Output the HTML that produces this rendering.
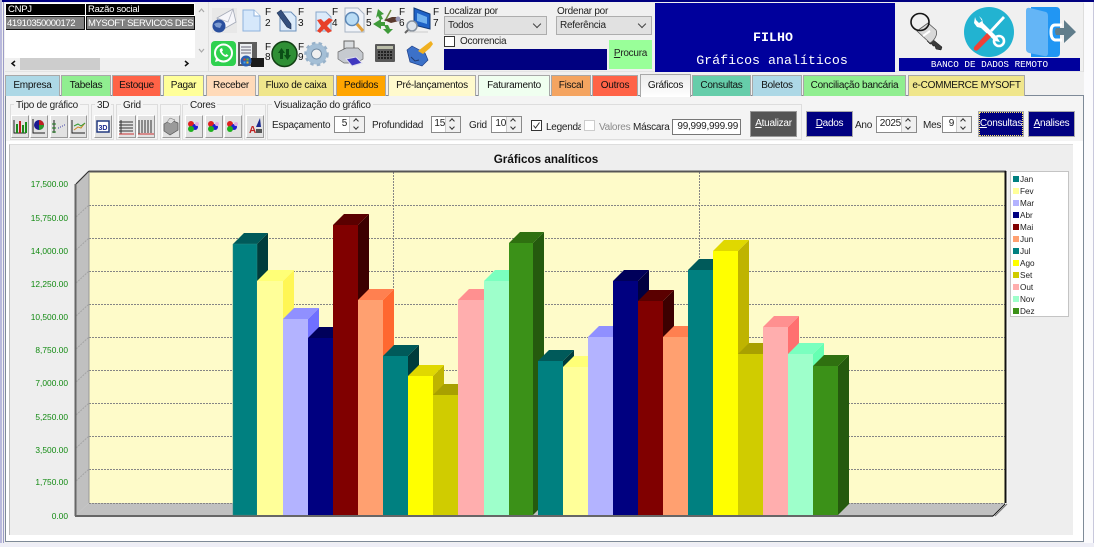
<!DOCTYPE html>
<html><head><meta charset="utf-8"><style>
html,body{margin:0;padding:0;width:1094px;height:547px;overflow:hidden;background:#f0f0f0;font:10px "Liberation Sans",sans-serif;color:#222;letter-spacing:-.26px}
.a{position:absolute;box-sizing:border-box;white-space:nowrap}
.tab{position:absolute;top:75px;height:21px;box-sizing:border-box;border:1px solid #a8a8a8;border-bottom:none;text-align:center;line-height:20px;color:#111}
.gb{position:absolute;top:104px;height:36px;box-sizing:border-box;border:1px solid #ddd}
.gl{position:absolute;top:100px;background:#f4f4f4;padding:0 2px;line-height:12px;color:#222}
.tb{position:absolute;top:115px;height:23px;box-sizing:border-box;background:#e2e2e2;border:1px solid;border-color:#fff #999 #999 #fff}
.sp{position:absolute;height:17px;box-sizing:border-box;background:#fff;border:1px solid #8a8a8a;line-height:14px;text-align:right;padding-right:17px;color:#222}
.sp i{position:absolute;right:0;top:0;width:14px;height:15px;background:#f0f0f0;border-left:1px solid #ccc}
.sp i:before{content:"";position:absolute;left:4px;top:2px;width:3px;height:3px;border-left:1px solid #333;border-top:1px solid #333;transform:rotate(45deg)}
.sp i:after{content:"";position:absolute;left:4px;top:8px;width:3px;height:3px;border-right:1px solid #333;border-bottom:1px solid #333;transform:rotate(45deg)}
.nb{position:absolute;top:111px;height:26px;box-sizing:border-box;background:#000080;color:#fff;text-align:center;line-height:24px;border:1px solid #aaa}
.nb u,.pb u{text-decoration:underline}
.sel{position:absolute;top:16px;height:19px;box-sizing:border-box;background:#e1e1e1;border:1px solid #adadad;line-height:17px;padding-left:3px;color:#222}
.sel:after{content:"";position:absolute;right:6px;top:4px;width:5px;height:5px;border-right:1px solid #444;border-bottom:1px solid #444;transform:rotate(45deg)}
.cb{position:absolute;width:11px;height:11px;box-sizing:border-box;background:#fff;border:1px solid #333}
svg{position:absolute;overflow:visible;letter-spacing:0}
</style></head><body>

<div class="a" style="left:0;top:0;width:1094px;height:2px;background:#000080"></div>
<div class="a" style="left:0;top:0;width:2px;height:547px;background:#b9b9dc"></div>
<div class="a" style="left:3px;top:2px;width:1px;height:545px;background:#9c9cc8"></div>
<div class="a" style="left:1084px;top:2px;width:10px;height:545px;background:#fbfbfd"></div>
<div class="a" style="left:1093px;top:2px;width:1px;height:545px;background:#c8c8dc"></div>

<!-- grid -->
<div class="a" style="left:5px;top:3px;width:190px;height:55px;background:#fff"></div>
<div class="a" style="left:6px;top:4px;width:79px;height:11px;background:#000;color:#fff;line-height:11px;padding-left:2px;font-size:9.5px">CNPJ</div>
<div class="a" style="left:86px;top:4px;width:108px;height:11px;background:#000;color:#fff;line-height:11px;padding-left:2px;font-size:9.5px">Razão social</div>
<div class="a" style="left:6px;top:16px;width:79px;height:14px;background:#808080;color:#fff;line-height:13px;padding-left:1px;font-size:9.5px;letter-spacing:-.42px;border:1px solid #111;border-width:1px 1px 1px 0">41910350000172</div>
<div class="a" style="left:86px;top:16px;width:109px;height:14px;background:#808080;color:#fff;line-height:13px;padding-left:1px;font-size:9.5px;letter-spacing:-.42px;border:1px solid #111;overflow:hidden">MYSOFT SERVICOS DESEI</div>
<div class="a" style="left:195px;top:3px;width:13px;height:55px;background:#f0f0f0"></div>
<div class="a" style="left:5px;top:58px;width:203px;height:13px;background:#f0f0f0"></div>
<div class="a" style="left:20px;top:58px;width:80px;height:12px;background:#cdcdcd"></div>
<div class="a" style="left:208px;top:2px;width:1px;height:70px;background:#e0e0e0"></div>
<div class="a" style="left:5px;top:71px;width:1078px;height:1px;background:#e3e3e3"></div>
<div class="a" style="left:1083px;top:3px;width:1px;height:69px;background:#ddd"></div>

<!-- toolbar icons -->
<svg style="left:0;top:0" width="1094" height="75" viewBox="0 0 1094 75">
<path d="M16 62l-3 2.500 3 2.500M186 62l3 2.500-3 2.500" fill="none" stroke="#111" stroke-width="1.500" transform="translate(-1,-1)"/>
<path d="M199 12l2.500-3 2.500 3M199 49l2.500 3 2.500-3" fill="none" stroke="#aaa" stroke-width="1.200"/>
<!-- mail -->
<rect x="212" y="8" width="25" height="25" fill="#e8e8e8"/>
<path d="M217 18l16-9 3 13-14 8z" fill="#f6f6fa" stroke="#a4aab8" stroke-width=".8"/>
<path d="M217 18l11 4 5-13" fill="none" stroke="#b4b8c4" stroke-width=".8"/>
<circle cx="219" cy="26" r="6.500" fill="#2a4f9e"/><path d="M214 24q5-3 8 0l-2 4-4-1z" fill="#7c9ad0"/>
<!-- doc -->
<path d="M243 10h11l6 6v15h-17z" fill="#d6e8fb" stroke="#8eb2dc"/><path d="M254 10v6h6" fill="#fff" stroke="#8eb2dc"/>
<!-- pencil doc -->
<path d="M280 12h11l5 5v14h-16z" fill="#dcebfa" stroke="#6d92bc"/>
<path d="M277 13l4-3 10 14 0 5-4-2z" fill="#34507e" stroke="#1d2e50" stroke-width=".6"/>
<!-- delete doc -->
<path d="M316 12h10l5 5v14h-15z" fill="#dcebfa" stroke="#8aa8cc"/>
<path d="M317 20l4-1 3 3 5-4 4 2-6 6 5 5-4 2-4-4-4 4-3-2 4-5z" fill="#e8402a"/>
<!-- find doc -->
<path d="M345 8h13l6 6v18h-19z" fill="#f0f3f8" stroke="#a9b4c4"/>
<circle cx="352" cy="19" r="6.500" fill="#b9dcf5" stroke="#5c87b5" stroke-width="1.500"/>
<path d="M357 24l6 7" stroke="#e0a03c" stroke-width="3"/>
<!-- tools -->
<path d="M373 24l8-5v3h4v4h-4v3z" fill="#3f9b3a"/><path d="M384 25l2 4h-3l5 5 5-5h-3l-2-4z" fill="#3f9b3a"/><path d="M378 9l6 5-3 1 2 4-3 1-2-4-2 2z" fill="#3f9b3a"/>
<path d="M391 10l-6 11" stroke="#6a8c3e" stroke-width="1.500"/>
<path d="M384 20l8-3 7 0v4l-8 2z" fill="#5a3a2e"/><circle cx="398" cy="19" r="2.500" fill="#9a9ab8"/>
<!-- computer -->
<path d="M414 8l16 6v15l-16-4z" fill="#1f62c6" stroke="#123a78"/><path d="M417 13l10 4v7l-10-3z" fill="#6fb0ee"/>
<circle cx="412" cy="26" r="5" fill="#dde3ea" stroke="#88929e" stroke-width="1.500"/><path d="M408 30l-3 3" stroke="#666" stroke-width="2"/>
<path d="M408 32h20" stroke="#ccc" stroke-width="1"/>
<!-- whatsapp -->
<rect x="211" y="41" width="25" height="25" rx="4" fill="#2fd14f"/>
<circle cx="223.500" cy="53" r="8.500" fill="none" stroke="#fff" stroke-width="2"/>
<path d="M215 62l1.500-5 3.500 3.500z" fill="#fff"/>
<path d="M220 49c-1 2 1 5 3 6.500s4 2 5.500 0l-2-1.500-1 1c-1 0-3-2-3.500-3.500l1-1-1-2.500z" fill="#fff"/>
<!-- server -->
<rect x="238" y="42" width="19" height="24" fill="#5e5e5e"/><rect x="240" y="44" width="12" height="20" fill="#eceff2"/>
<path d="M241 47h10M241 50h10M241 53h10" stroke="#667" stroke-width="1"/>
<rect x="251" y="58" width="13" height="9" fill="#1a1a1a"/>
<circle cx="246" cy="61" r="5.500" fill="#2a60b0"/><path d="M243.500 58.500h2v2h-2z" fill="#e04a2a"/><path d="M246.500 58.500h2v2h-2z" fill="#6ab82e"/><path d="M243.500 61.500h2v2h-2z" fill="#3fa0e8"/><path d="M246.500 61.500h2v2h-2z" fill="#f0c020"/>
<!-- refresh -->
<circle cx="284.500" cy="54" r="12.500" fill="#2f8f35" stroke="#123f14" stroke-width="1.500"/>
<path d="M278 53l3.500-5 3.500 5h-2v6h-3v-6zM291 55l-3.500 5-3.500-5h2v-6h3v6z" fill="#0b4f16"/>
<!-- gear -->
<circle cx="316.500" cy="54" r="8" fill="none" stroke="#a4bfd6" stroke-width="5"/>
<circle cx="316.500" cy="54" r="11" fill="none" stroke="#98b2ca" stroke-width="2.500" stroke-dasharray="3.500 3.200"/>
<circle cx="316.500" cy="54" r="5" fill="#f0f0f0" stroke="#6e8aa4"/>
<!-- printer -->
<path d="M344 41h10v8h-10z" fill="#d9dcdf" stroke="#666"/>
<path d="M338 52l8-4h12l5 5v6l-7 4h-12l-6-4z" fill="#c6cad0" stroke="#666" stroke-width=".7"/>
<path d="M346 59l10-2 6 6-10 3z" fill="#4038c0" stroke="#dde"/>
<!-- calc -->
<rect x="375" y="44" width="20" height="18" rx="1" fill="#595959"/><rect x="377" y="46" width="16" height="3" fill="#b9bca8"/>
<path d="M378 52h14M378 55h14M378 58h14" stroke="#1a1a1a" stroke-width="1.800" stroke-dasharray="2 1"/>
<!-- brush -->
<path d="M407 50l5-4 13 7 3 7-6 6-12-4z" fill="#3c71c8" stroke="#1f3f88" stroke-width=".7"/>
<path d="M411 57l4 4 4-1" fill="none" stroke="#203a70"/>
<path d="M418 51l9-7 4-3 2 3-3 4-7 6z" fill="#f0b020"/>
<!-- F labels -->
<g font-family="'Liberation Sans',sans-serif" font-size="10" fill="#111">
<text x="265" y="15">F</text><text x="265" y="26">2</text>
<text x="298" y="15">F</text><text x="298" y="26">3</text>
<text x="332" y="15">F</text><text x="332" y="26">4</text>
<text x="366" y="15">F</text><text x="366" y="26">5</text>
<text x="399" y="15">F</text><text x="399" y="26">6</text>
<text x="433" y="15">F</text><text x="433" y="26">7</text>
<text x="265" y="50">F</text><text x="265" y="60">8</text>
<text x="298" y="50">F</text><text x="298" y="60">9</text>
</g>
<!-- key -->
<path d="M931 38l11 9-1 3-5-1-1-3-2 0-1-2-2 0-3-3z" fill="#3a3a3a" stroke="#111" stroke-width=".5"/>
<path d="M917 31l11-8 8 7c2 4-1 10-6 13z" fill="#d8d8d8" stroke="#555" stroke-width=".8"/>
<ellipse cx="920" cy="22" rx="9" ry="8.500" fill="none" stroke="#151515" stroke-width="1.600"/>
<path d="M923 36l7-5" stroke="#fff" stroke-width="2"/>
<!-- tools circle -->
<circle cx="989" cy="32" r="25" fill="#22b3d1"/>
<path d="M975 17l-1 6 3 4 4 1 14 13 5 1-3-5-14-14-1-4-3-3 3 5-3 2-3-3z" fill="#fff"/>
<circle cx="999" cy="41" r="5" fill="none" stroke="#fff" stroke-width="2.600"/>
<path d="M1003 16l2 2-13 14-2-2z" fill="#fff"/>
<path d="M975 46l12-13 4 4-13 13c-3 2-6-1-3-4z" fill="#ef4136"/>
<!-- door -->
<path d="M1031 7h25q4 0 4 4v42q0 4-4 4h-25z" fill="#2196f3"/>
<path d="M1026 11q0-4 4-3l16 4q2 1 2 4v37q0 4-4 3l-15-3q-3-1-3-4z" fill="#64b5f6"/>
<path d="M1062 25h-7q-4 0-4 7t4 8h7" fill="none" stroke="#fff" stroke-width="3"/>
<path d="M1056 28h8v-8l12 12-12 11v-8h-8q-2-4 0-7z" fill="#607d8b"/>
</svg>

<!-- search -->
<div class="a" style="left:444px;top:6px;line-height:12px">Localizar por</div>
<div class="a" style="left:557px;top:6px;line-height:12px">Ordenar por</div>
<div class="sel" style="left:444px;width:103px">Todos</div>
<div class="sel" style="left:556px;width:96px">Referência</div>
<div class="cb" style="left:444px;top:36px"></div>
<div class="a" style="left:460px;top:36px;line-height:12px">Ocorrencia</div>
<div class="a" style="left:444px;top:49px;width:163px;height:21px;background:#000080"></div>
<div class="a pb" style="left:609px;top:40px;width:43px;height:29px;background:#99ff99;text-align:center;line-height:27px"><u>P</u>rocura</div>

<div class="a" style="left:655px;top:3px;width:240px;height:69px;background:#00009c;color:#fff;text-align:center;font-family:'Liberation Mono',monospace;letter-spacing:0">
<div class="a" style="left:-2px;width:240px;top:27px;line-height:16px;font-size:13.300px;font-weight:bold">FILHO</div>
<div class="a" style="left:-3px;width:240px;top:49px;line-height:17px;font-size:13.300px;">Gráficos analíticos</div>
</div>
<div class="a" style="left:899px;top:58px;width:181px;height:13px;background:#00009c;color:#fff;text-align:center;font:9.300px/13px 'Liberation Mono',monospace;letter-spacing:0">BANCO DE DADOS REMOTO</div>

<!-- tab panel -->
<div class="a" style="left:5px;top:95px;width:1079px;height:447px;background:#fff;border:1px solid #7e8a98"></div>
<div class="a" style="left:6px;top:96px;width:1077px;height:45px;background:#f4f4f4"></div>
<div class="a" style="left:0;top:543px;width:1094px;height:4px;background:#eeeef6"></div>

<div class="tab" style="left:5px;width:55px;background:#add8e6">Empresa</div>
<div class="tab" style="left:61px;width:50px;background:#90ee90">Tabelas</div>
<div class="tab" style="left:112px;width:49px;background:#ff6347">Estoque</div>
<div class="tab" style="left:163px;width:41px;background:#ffff99">Pagar</div>
<div class="tab" style="left:206px;width:50px;background:#ffdab9">Receber</div>
<div class="tab" style="left:258px;width:76px;background:#f0e68c">Fluxo de caixa</div>
<div class="tab" style="left:336px;width:50px;background:#ffa500">Pedidos</div>
<div class="tab" style="left:388px;width:88px;background:#fffacd">Pré-lançamentos</div>
<div class="tab" style="left:478px;width:72px;background:#f0fff0">Faturamento</div>
<div class="tab" style="left:551px;width:40px;background:#f4a460">Fiscal</div>
<div class="tab" style="left:592px;width:46px;background:#ff6347">Outros</div>
<div class="tab" style="left:640px;width:51px;top:74px;height:23px;background:linear-gradient(#ececec,#fff);z-index:2;line-height:22px;border-bottom:none">Gráficos</div>
<div class="tab" style="left:692px;width:59px;background:#66cdaa">Consultas</div>
<div class="tab" style="left:752px;width:50px;background:#add8e6">Boletos</div>
<div class="tab" style="left:803px;width:103px;background:#90ee90">Conciliação bancária</div>
<div class="tab" style="left:908px;width:117px;background:#f0e68c">e-COMMERCE MYSOFT</div>

<!-- group boxes -->
<div class="gb" style="left:10px;width:79px"></div><div class="gl" style="left:14px">Tipo de gráfico</div>
<div class="gb" style="left:91px;width:23px"></div><div class="gl" style="left:95px">3D</div>
<div class="gb" style="left:116px;width:42px"></div><div class="gl" style="left:121px">Grid</div>
<div class="gb" style="left:160px;width:21px"></div>
<div class="gb" style="left:182px;width:61px"></div><div class="gl" style="left:188px">Cores</div>
<div class="gb" style="left:244px;width:22px"></div>
<div class="gb" style="left:267px;width:535px"></div><div class="gl" style="left:272px">Visualização do gráfico</div>

<!-- toolbuttons -->
<div class="tb" style="left:11px;width:18px"></div><div class="tb" style="left:30px;width:18px"></div><div class="tb" style="left:50px;width:18px"></div><div class="tb" style="left:69px;width:18px"></div>
<div class="tb" style="left:94px;width:18px"></div>
<div class="tb" style="left:118px;width:18px"></div><div class="tb" style="left:137px;width:18px"></div>
<div class="tb" style="left:162px;width:18px"></div>
<div class="tb" style="left:185px;width:18px"></div><div class="tb" style="left:205px;width:18px"></div><div class="tb" style="left:224px;width:18px"></div>
<div class="tb" style="left:246px;width:18px"></div>
<svg style="left:0;top:0;z-index:3" width="400" height="145" viewBox="0 0 400 145">
<path d="M14 120v13h12" fill="none" stroke="#222"/><path d="M16 124h2v9h-2z" fill="#1a8a1a"/><path d="M19 121h2v12h-2z" fill="#c02020"/><path d="M22 125h2v8h-2zM25 122h2v11h-2z" fill="#1a8a1a"/>
<path d="M33 119v14h12" fill="none" stroke="#222"/><circle cx="39" cy="125" r="5" fill="#1a1a90"/><path d="M39 125v-5a5 5 0 0 1 5 5z" fill="#c02020"/><path d="M39 125h5a5 5 0 0 1-5 5z" fill="#2a9a2a"/>
<path d="M54 120v13" stroke="#222"/><path d="M52 124h4M52 128h4M52 132h4" stroke="#1a7a1a"/><path d="M58 128h1M60 127h1M62 126h1M64 125h1" stroke="#44a"/>
<path d="M72 120v13h13" fill="none" stroke="#222"/><path d="M74 130l4-3 3 1 4-5" fill="none" stroke="#c82"/><path d="M74 126l4-2 3 2 4-3" fill="none" stroke="#393"/>
<rect x="97" y="121" width="12" height="11" fill="#fff" stroke="#223a80" stroke-width="1.500"/><text x="98.500" y="130" font-size="7" font-weight="bold" fill="#1a2a90" font-family="'Liberation Sans',sans-serif">3D</text>
<path d="M121 120v14M119 122h14M119 125h14M119 128h14M119 131h14" stroke="#333" fill="none"/><path d="M119 134h15" stroke="#c33"/>
<path d="M139 120v14h15M142 120v13M145 120v13M148 120v13M151 120v13" stroke="#333" fill="none"/><path d="M138 134h16" stroke="#c33"/>
<path d="M164 124l7-4 7 3v7l-8 5-6-4z" fill="#9a9a9a" stroke="#555" stroke-width=".7"/><path d="M170 118l5 2-4 4-4-2z" fill="#ddd" stroke="#666" stroke-width=".5"/>
<circle cx="191" cy="124" r="3" fill="#e02020"/><circle cx="195" cy="127" r="3" fill="#2020d0"/><circle cx="191" cy="129" r="3" fill="#20b020"/><circle cx="197" cy="124" r="2" fill="#e0b0e0"/>
<circle cx="211" cy="124" r="3" fill="#e02020"/><circle cx="215" cy="127" r="3" fill="#2020d0"/><circle cx="211" cy="129" r="3" fill="#20b020"/><circle cx="217" cy="124" r="2" fill="#e0b0e0"/>
<circle cx="230" cy="124" r="3" fill="#e02020"/><circle cx="234" cy="127" r="3" fill="#2020d0"/><circle cx="230" cy="129" r="3" fill="#20b020"/><circle cx="236" cy="124" r="2" fill="#e0b0e0"/>
<text x="249" y="133" font-size="10" font-weight="bold" fill="#c02020" font-family="'Liberation Sans',sans-serif">A</text><path d="M256 127l4-9 1 9z" fill="#1a2a90"/><path d="M256 129h6v4h-6z" fill="#555"/>
</svg>

<!-- fields -->
<div class="a" style="left:272px;top:119px;line-height:13px">Espaçamento</div>
<div class="sp" style="left:334px;top:116px;width:31px">5<i></i></div>
<div class="a" style="left:372px;top:119px;line-height:13px">Profundidad</div>
<div class="sp" style="left:431px;top:116px;width:30px;padding-right:15px">15<i></i></div>
<div class="a" style="left:469px;top:119px;line-height:13px">Grid</div>
<div class="sp" style="left:491px;top:116px;width:31px;padding-right:15px">10<i></i></div>
<div class="cb" style="left:531px;top:120px"><svg width="9" height="9" style="left:0;top:0"><path d="M1.500 4.500l2 2.500 4-5.500" fill="none" stroke="#333" stroke-width="1"/></svg></div>
<div class="a" style="left:546px;top:121px;width:35px;overflow:hidden;line-height:13px">Legenda</div>
<div class="cb" style="left:584px;top:120px;border-color:#ccc"></div>
<div class="a" style="left:599px;top:121px;line-height:13px;color:#8a8a8a">Valores</div>
<div class="a" style="left:633px;top:121px;line-height:13px">Máscara</div>
<div class="a" style="left:672px;top:119px;width:69px;height:16px;background:#fff;border:1px solid #777;text-align:right;line-height:14px;padding-right:2px">99,999,999.99</div>
<div class="a" style="left:750px;top:111px;width:47px;height:26px;background:#555;color:#fff;text-align:center;line-height:24px;border:1px solid #999"><u>A</u>tualizar</div>
<div class="nb" style="left:806px;width:47px"><u>D</u>ados</div>
<div class="a" style="left:855px;top:119px;line-height:13px">Ano</div>
<div class="sp" style="left:876px;top:116px;width:41px;padding-right:15px">2025<i></i></div>
<div class="a" style="left:923px;top:119px;line-height:13px">Mes</div>
<div class="sp" style="left:942px;top:116px;width:30px">9<i></i></div>
<div class="nb" style="left:978px;width:46px;outline:1px dotted #ffe866;outline-offset:-2px"><u>C</u>onsultas</div>
<div class="nb" style="left:1028px;width:47px"><u>A</u>nalises</div>

<!-- chart panel -->
<div class="a" style="left:9px;top:144px;width:1064px;height:391px;background:#eee;border-left:1px solid #bbb;border-top:1px solid #ddd"></div>

<svg style="left:0;top:0" width="1094" height="547" viewBox="0 0 1094 547">
<text x="546" y="163" text-anchor="middle" font-family="'Liberation Sans',sans-serif" font-size="11.700" font-weight="bold" fill="#111">Gráficos analíticos</text>
<rect x="89" y="172" width="916" height="331" fill="#fefbc9"/>
<path d="M76 184l13-12V503l-13 12z" fill="#c0c0c0"/>
<path d="M76 515l13-12H1005l-12 12z" fill="#c0c0c0"/>
<g stroke="#858585" stroke-width="1" stroke-dasharray="2 1" fill="none">
<path d="M89 205.500H1005M89 238.500H1005M89 271.500H1005M89 304.500H1005M89 337.500H1005M89 370.500H1005M89 403.500H1005M89 436.500H1005M89 469.500H1005M89 503.500H1005"/>
<path d="M393.500 172V503M699.500 172V503"/>
<path d="M76 217l13-12M76 250l13-12M76 283l13-12M76 316l13-12M76 349l13-12M76 382l13-12M76 415l13-12M76 448l13-12M76 481l13-12" stroke="#a4a4a4"/>
</g>
<path d="M89 171.500H1006" stroke="#555" stroke-width="2"/>
<path d="M89 172V503" stroke="#999"/>
<path d="M76 184l13-13" stroke="#333" stroke-width="1.200"/>
<path d="M75.500 184V516" stroke="#666" stroke-width="2"/>
<path d="M75 516H993" stroke="#666" stroke-width="2"/>
<path d="M1005.500 171V503" stroke="#111" stroke-width="2"/>
<path d="M1007 172V503" stroke="#fff"/>
<path d="M993 516l12-12" stroke="#111" stroke-width="1"/><path d="M995 516l12-12" stroke="#777" stroke-width="1"/>

<!-- y labels -->
<g font-family="'Liberation Sans',sans-serif" font-size="8.400" fill="#128a12" text-anchor="end">
<text x="68" y="187">17,500.00</text><text x="68" y="221">15,750.00</text><text x="68" y="254">14,000.00</text><text x="68" y="287">12,250.00</text><text x="68" y="320">10,500.00</text><text x="68" y="353">8,750.00</text><text x="68" y="386">7,000.00</text><text x="68" y="420">5,250.00</text><text x="68" y="453">3,500.00</text><text x="68" y="485">1,750.00</text><text x="68" y="519">0.00</text>
</g>

<!-- bars -->
<path d="M257 244l11-11V504l-11 11z" fill="#003c3c"/><path d="M233 244l11-11h24l-11 11z" fill="#005a5a"/><path d="M233 244h24V515h-24z" fill="#008080" stroke="#2a8a80" stroke-width=".5"/>
<path d="M283 281l11-11V504l-11 11z" fill="#fff655"/><path d="M257 281l11-11h26l-11 11z" fill="#ffff77"/><path d="M257 281h26V515h-26z" fill="#ffff99"/>
<path d="M308 319l11-11V504l-11 11z" fill="#7070ff"/><path d="M283 319l11-11h25l-11 11z" fill="#9090ff"/><path d="M283 319h25V515h-25z" fill="#b3b3ff"/>
<path d="M333 338l11-11V504l-11 11z" fill="#000040"/><path d="M308 338l11-11h25l-11 11z" fill="#00005a"/><path d="M308 338h25V515h-25z" fill="#000080"/>
<path d="M358 225l11-11V504l-11 11z" fill="#3c0000"/><path d="M333 225l11-11h25l-11 11z" fill="#5a0000"/><path d="M333 225h25V515h-25z" fill="#800000"/>
<path d="M383 300l11-11V504l-11 11z" fill="#ff6830"/><path d="M358 300l11-11h25l-11 11z" fill="#ff8050"/><path d="M358 300h25V515h-25z" fill="#ffa070"/>
<path d="M408 356l11-11V504l-11 11z" fill="#003c3c"/><path d="M383 356l11-11h25l-11 11z" fill="#005a5a"/><path d="M383 356h25V515h-25z" fill="#008080"/>
<path d="M433 376l11-11V504l-11 11z" fill="#bfb400"/><path d="M408 376l11-11h25l-11 11z" fill="#e0d800"/><path d="M408 376h25V515h-25z" fill="#ffff00"/>
<path d="M458 395l11-11V504l-11 11z" fill="#a89e00"/><path d="M433 395l11-11h25l-11 11z" fill="#a8a000"/><path d="M433 395h25V515h-25z" fill="#d0cc00"/>
<path d="M484 300l11-11V504l-11 11z" fill="#ff7070"/><path d="M458 300l11-11h26l-11 11z" fill="#ff9090"/><path d="M458 300h26V515h-26z" fill="#ffaeae"/>
<path d="M509 281l11-11V504l-11 11z" fill="#66ffb3"/><path d="M484 281l11-11h25l-11 11z" fill="#7affbf"/><path d="M484 281h25V515h-25z" fill="#9effcb"/>
<path d="M533 243l11-11V504l-11 11z" fill="#255a0e"/><path d="M509 243l11-11h24l-11 11z" fill="#2f7010"/><path d="M509 243h24V515h-24z" fill="#3b9118"/>

<path d="M563 361l11-11V504l-11 11z" fill="#003c3c"/><path d="M538 361l11-11h25l-11 11z" fill="#005a5a"/><path d="M538 361h25V515h-25z" fill="#008080"/>
<path d="M588 367l11-11V504l-11 11z" fill="#fff655"/><path d="M563 367l11-11h25l-11 11z" fill="#ffff77"/><path d="M563 367h25V515h-25z" fill="#ffff99"/>
<path d="M613 337l11-11V504l-11 11z" fill="#7070ff"/><path d="M588 337l11-11h25l-11 11z" fill="#9090ff"/><path d="M588 337h25V515h-25z" fill="#b3b3ff"/>
<path d="M638 281l11-11V504l-11 11z" fill="#000040"/><path d="M613 281l11-11h25l-11 11z" fill="#00005a"/><path d="M613 281h25V515h-25z" fill="#000080"/>
<path d="M663 301l11-11V504l-11 11z" fill="#3c0000"/><path d="M638 301l11-11h25l-11 11z" fill="#5a0000"/><path d="M638 301h25V515h-25z" fill="#800000"/>
<path d="M688 337l11-11V504l-11 11z" fill="#ff6830"/><path d="M663 337l11-11h25l-11 11z" fill="#ff8050"/><path d="M663 337h25V515h-25z" fill="#ffa070"/>
<path d="M713 270l11-11V504l-11 11z" fill="#003c3c"/><path d="M688 270l11-11h25l-11 11z" fill="#005a5a"/><path d="M688 270h25V515h-25z" fill="#008080"/>
<path d="M738 251l11-11V504l-11 11z" fill="#bfb400"/><path d="M713 251l11-11h25l-11 11z" fill="#e0d800"/><path d="M713 251h25V515h-25z" fill="#ffff00"/>
<path d="M763 354l11-11V504l-11 11z" fill="#a89e00"/><path d="M738 354l11-11h25l-11 11z" fill="#a8a000"/><path d="M738 354h25V515h-25z" fill="#d0cc00"/>
<path d="M788 327l11-11V504l-11 11z" fill="#ff7070"/><path d="M763 327l11-11h25l-11 11z" fill="#ff9090"/><path d="M763 327h25V515h-25z" fill="#ffaeae"/>
<path d="M813 354l11-11V504l-11 11z" fill="#66ffb3"/><path d="M788 354l11-11h25l-11 11z" fill="#7affbf"/><path d="M788 354h25V515h-25z" fill="#9effcb"/>
<path d="M838 366l11-11V504l-11 11z" fill="#255a0e"/><path d="M813 366l11-11h25l-11 11z" fill="#2f7010"/><path d="M813 366h25V515h-25z" fill="#3b9118"/>

<!-- legend -->
<rect x="1010.500" y="171.500" width="58" height="145" fill="#fff" stroke="#c4c4c4"/>
<g>
<rect x="1013" y="176" width="6" height="6" fill="#008080"/><rect x="1013" y="188" width="6" height="6" fill="#ffff99"/><rect x="1013" y="200" width="6" height="6" fill="#b3b3ff"/><rect x="1013" y="212" width="6" height="6" fill="#000080"/><rect x="1013" y="224" width="6" height="6" fill="#800000"/><rect x="1013" y="236" width="6" height="6" fill="#ffa070"/><rect x="1013" y="248" width="6" height="6" fill="#008080"/><rect x="1013" y="260" width="6" height="6" fill="#ffff00"/><rect x="1013" y="272" width="6" height="6" fill="#d0cc00"/><rect x="1013" y="284" width="6" height="6" fill="#ffaeae"/><rect x="1013" y="296" width="6" height="6" fill="#9effcb"/><rect x="1013" y="308" width="6" height="6" fill="#3b9118"/>
</g>
<g font-family="'Liberation Sans',sans-serif" font-size="8.200" fill="#222">
<text x="1020" y="182">Jan</text><text x="1020" y="194">Fev</text><text x="1020" y="206">Mar</text><text x="1020" y="218">Abr</text><text x="1020" y="230">Mai</text><text x="1020" y="242">Jun</text><text x="1020" y="254">Jul</text><text x="1020" y="266">Ago</text><text x="1020" y="278">Set</text><text x="1020" y="290">Out</text><text x="1020" y="302">Nov</text><text x="1020" y="314">Dez</text>
</g>
</svg>
</body></html>
